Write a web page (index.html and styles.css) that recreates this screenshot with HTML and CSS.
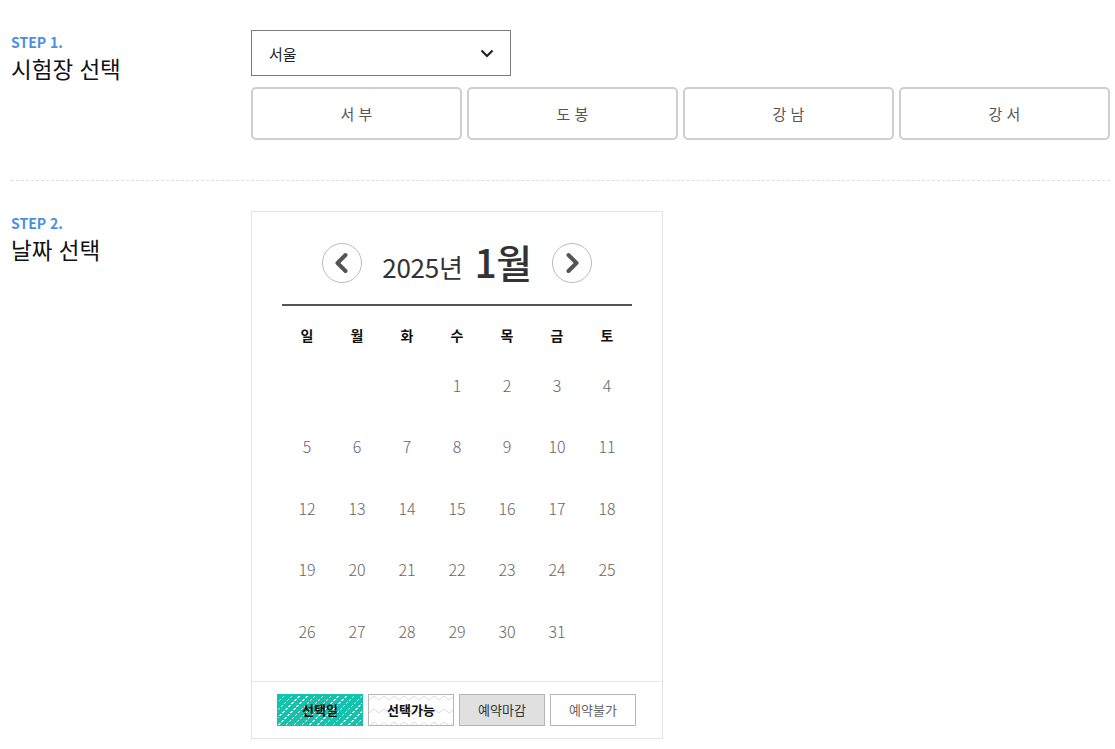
FILE: index.html
```html
<!DOCTYPE html>
<html lang="ko">
<head>
<meta charset="utf-8">
<link rel="stylesheet" href="styles.css">
</head>
<body>
<div class="page">
  <section class="step step-1">
    <div class="label">
      <div class="step-no">STEP 1.</div>
      <div class="step-title">시험장 선택</div>
    </div>
    <div class="content">
      <div class="select">
        <span>서울</span>
        <svg class="chev" width="14" height="9" viewBox="0 0 14 9"><path d="M1.5 1.5 L7 7 L12.5 1.5" fill="none" stroke="#222" stroke-width="2.2"/></svg>
      </div>
      <div class="sites">
        <button class="site">서 부</button>
        <button class="site">도 봉</button>
        <button class="site">강 남</button>
        <button class="site">강 서</button>
      </div>
    </div>
  </section>
  <div class="divider"></div>
  <section class="step step-2">
    <div class="label">
      <div class="step-no">STEP 2.</div>
      <div class="step-title">날짜 선택</div>
    </div>
    <div class="content">
      <div class="calendar">
        <div class="cal-head">
          <button class="nav"><svg width="40" height="40" viewBox="0 0 40 40"><path d="M23.5 12 L15.5 20 L23.5 28" fill="none" stroke="#555" stroke-width="4" stroke-linecap="round" stroke-linejoin="round"/></svg></button>
          <div class="ym"><span class="year">2025년</span><span class="month">1월</span></div>
          <button class="nav"><svg width="40" height="40" viewBox="0 0 40 40"><path d="M16.5 12 L24.5 20 L16.5 28" fill="none" stroke="#555" stroke-width="4" stroke-linecap="round" stroke-linejoin="round"/></svg></button>
        </div>
        <div class="grid">
          <div class="wd">일</div><div class="wd">월</div><div class="wd">화</div><div class="wd">수</div><div class="wd">목</div><div class="wd">금</div><div class="wd">토</div>
          <div class="d"></div><div class="d"></div><div class="d"></div><div class="d">1</div><div class="d">2</div><div class="d">3</div><div class="d">4</div>
          <div class="d">5</div><div class="d">6</div><div class="d">7</div><div class="d">8</div><div class="d">9</div><div class="d">10</div><div class="d">11</div>
          <div class="d">12</div><div class="d">13</div><div class="d">14</div><div class="d">15</div><div class="d">16</div><div class="d">17</div><div class="d">18</div>
          <div class="d">19</div><div class="d">20</div><div class="d">21</div><div class="d">22</div><div class="d">23</div><div class="d">24</div><div class="d">25</div>
          <div class="d">26</div><div class="d">27</div><div class="d">28</div><div class="d">29</div><div class="d">30</div><div class="d">31</div><div class="d"></div>
        </div>
        <div class="legend">
          <span class="lg lg-sel">선택일</span>
          <span class="lg lg-avail">선택가능</span>
          <span class="lg lg-closed">예약마감</span>
          <span class="lg lg-na">예약불가</span>
        </div>
      </div>
    </div>
  </section>
</div>
</body>
</html>
```
FILE: styles.css
```css
* { box-sizing: border-box; }
html, body { margin: 0; padding: 0; background: #fff; }
body {
  font-family: "Noto Sans CJK KR", "Noto Sans", sans-serif;
  color: #222;
}
.page { padding: 30px 5px 0 11px; width: 1115px; }
.step { display: flex; }
.label { width: 240px; flex: none; padding-top: 2px; }
.step-no { color: #4a90e2; font-weight: 700; font-size: 14px; line-height: 20px; }
.step-title { font-size: 22.5px; line-height: 32px; color: #111; margin-top: 0; }
.content { flex: 1; }
.select {
  width: 260px; height: 46px; border: 1px solid #7a7a7a;
  display: flex; align-items: center; justify-content: space-between;
  padding: 0 16px 0 17px; font-size: 15px; color: #222;
}
.sites { display: grid; grid-template-columns: repeat(4, 1fr); gap: 5px; margin-top: 11px; }
.site {
  height: 53px; border: 2px solid #cfcfcf; border-radius: 5px; background: #fff;
  font-family: inherit; font-size: 15px; color: #555;
}
.divider { border-top: 1px dashed #ddd; margin: 40px 0 0; }
.step-2 { padding-top: 30px; }
.calendar { width: 412px; border: 1px solid #e3e3e3; }
.cal-head { display: flex; align-items: center; justify-content: center; gap: 20px; padding-top: 29px; height: 72px; }
.nav {
  width: 40px; height: 40px; border-radius: 50%; border: 1px solid #bbb; background: #fff;
  padding: 0; display: flex; align-items: center; justify-content: center; flex: none;
}
.nav svg { display: block; margin: -1px; }
.ym { display: flex; align-items: baseline; gap: 12px; color: #333; margin-top: -4px; }
.year { font-size: 26px; line-height: 30px; letter-spacing: -0.3px; }
.month { font-size: 39px; font-weight: 500; line-height: 44px; letter-spacing: -0.5px; }
.grid {
  margin: 20px 30px 0; border-top: 2px solid #555;
  display: grid; grid-template-columns: repeat(7, 50px); grid-auto-rows: 61.5px;
  grid-template-rows: 48px;
}
.wd { display: flex; align-items: center; justify-content: center; font-size: 14px; font-weight: 700; color: #111; padding-top: 10px; height: 48px; }
.d { display: flex; align-items: center; justify-content: center; font-size: 16px; font-weight: 300; color: #666; }
.legend {
  margin-top: 19px; border-top: 1px solid #e6e6e6; padding: 12px 25px;
  display: flex; gap: 5px;
}
.lg {
  width: 86px; height: 32px; display: flex; align-items: center; justify-content: center;
  font-size: 13px; border: 1px solid #b5b5b5;
}
.lg-sel {
  border-color: #14c3ae; font-weight: 700; color: #111;
  background:
    repeating-linear-gradient(0deg, transparent 0 2px, #14c3ae 2px 3px),
    repeating-linear-gradient(135deg, #14c3ae 0 4.5px, rgba(255,255,255,.8) 4.5px 5.5px);
}
.lg-avail {
  font-weight: 700; color: #111; background-color: #fff;
  background-image: url("data:image/svg+xml,%3Csvg xmlns='http://www.w3.org/2000/svg' width='10' height='13'%3E%3Cpolyline points='0,5 5,1 10,5' fill='none' stroke='%23dcdcdc' stroke-width='1'/%3E%3C/svg%3E");
  background-size: 10px 13px; background-position: 0 0;
}
.lg-closed { background: #e0e0e0; color: #333; }
.lg-na { background: #fff; color: #666; }
```
